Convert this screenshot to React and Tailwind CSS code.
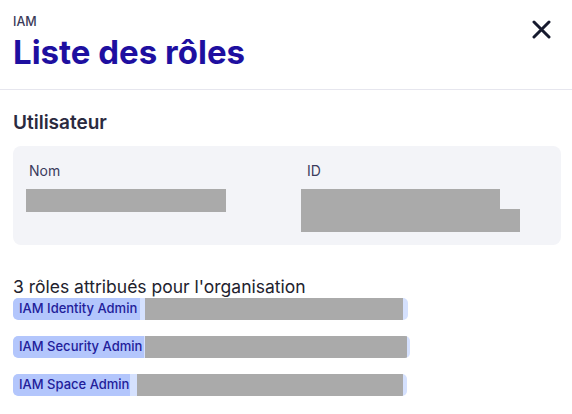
import React from "react";

function Tag({ label, labelW, gap, grayW, tail }) {
  return (
    <div className="flex h-[22px] items-stretch rounded-[5px] bg-[#d5e1fe] self-start overflow-hidden">
      <div
        className="flex items-center rounded-l-[5px] bg-[#b3c6fc] pl-[6px] text-[13px] font-medium text-[#22209a]"
        style={{ width: labelW }}
      >
        {label}
      </div>
      <div style={{ width: gap }} />
      <div className="bg-[#aaaaaa]" style={{ width: grayW }} />
      <div style={{ width: tail }} />
    </div>
  );
}

export default function App() {
  return (
    <div className="w-[572px] h-[414px] bg-white overflow-hidden" style={{ fontFamily: "Inter, 'Noto Sans', sans-serif" }}>
      <div className="flex justify-between pl-[13px] pr-[21px] pt-[14px] pb-[17px] border-b border-[#e6e6ee]">
        <div className="flex flex-col">
          <div className="text-[12.5px] leading-[16px] font-medium text-[#3a3a58]">IAM</div>
          <div className="mt-[2px] text-[33px] leading-[40px] font-bold text-[#1e0fa0]">Liste des rôles</div>
        </div>
        <svg width="19" height="19" viewBox="0 0 19 19" className="mt-[6px]">
          <path d="M2 2 L17 17 M17 2 L2 17" stroke="#161a2e" strokeWidth="3" strokeLinecap="round" />
        </svg>
      </div>
      <div className="pl-[13px] pr-[11px]">
        <div className="mt-[19px] text-[19px] leading-[28px] font-semibold text-[#2a2a40]">Utilisateur</div>
        <div className="mt-[9px] rounded-[8px] bg-[#f3f4f8] px-[13px] pt-[15px] pb-[13px] grid grid-cols-2 gap-x-[28px]">
          <div className="flex flex-col">
            <div className="ml-[3px] text-[14px] leading-[20px] text-[#3b3b5c]">Nom</div>
            <div className="mt-[8px] h-[23px] w-[200px] bg-[#aaaaaa]" />
          </div>
          <div className="flex flex-col">
            <div className="ml-[6px] text-[14px] leading-[20px] text-[#3b3b5c]">ID</div>
            <div className="mt-[8px] h-[20px] w-[199px] bg-[#aaaaaa]" />
            <div className="h-[23px] w-[219px] bg-[#aaaaaa]" />
          </div>
        </div>
        <div className="mt-[32px] text-[17.5px] leading-[20px] text-[#22222e]">3 rôles attribués pour l'organisation</div>
        <div className="mt-[1px] flex flex-col gap-[16px]">
          <Tag label="IAM Identity Admin" labelW={127} gap={5} grayW={258} tail={5} />
          <Tag label="IAM Security Admin" labelW={131} gap={1} grayW={262} tail={3} />
          <Tag label="IAM Space Admin" labelW={117} gap={7} grayW={266} tail={4} />
        </div>
      </div>
    </div>
  );
}
